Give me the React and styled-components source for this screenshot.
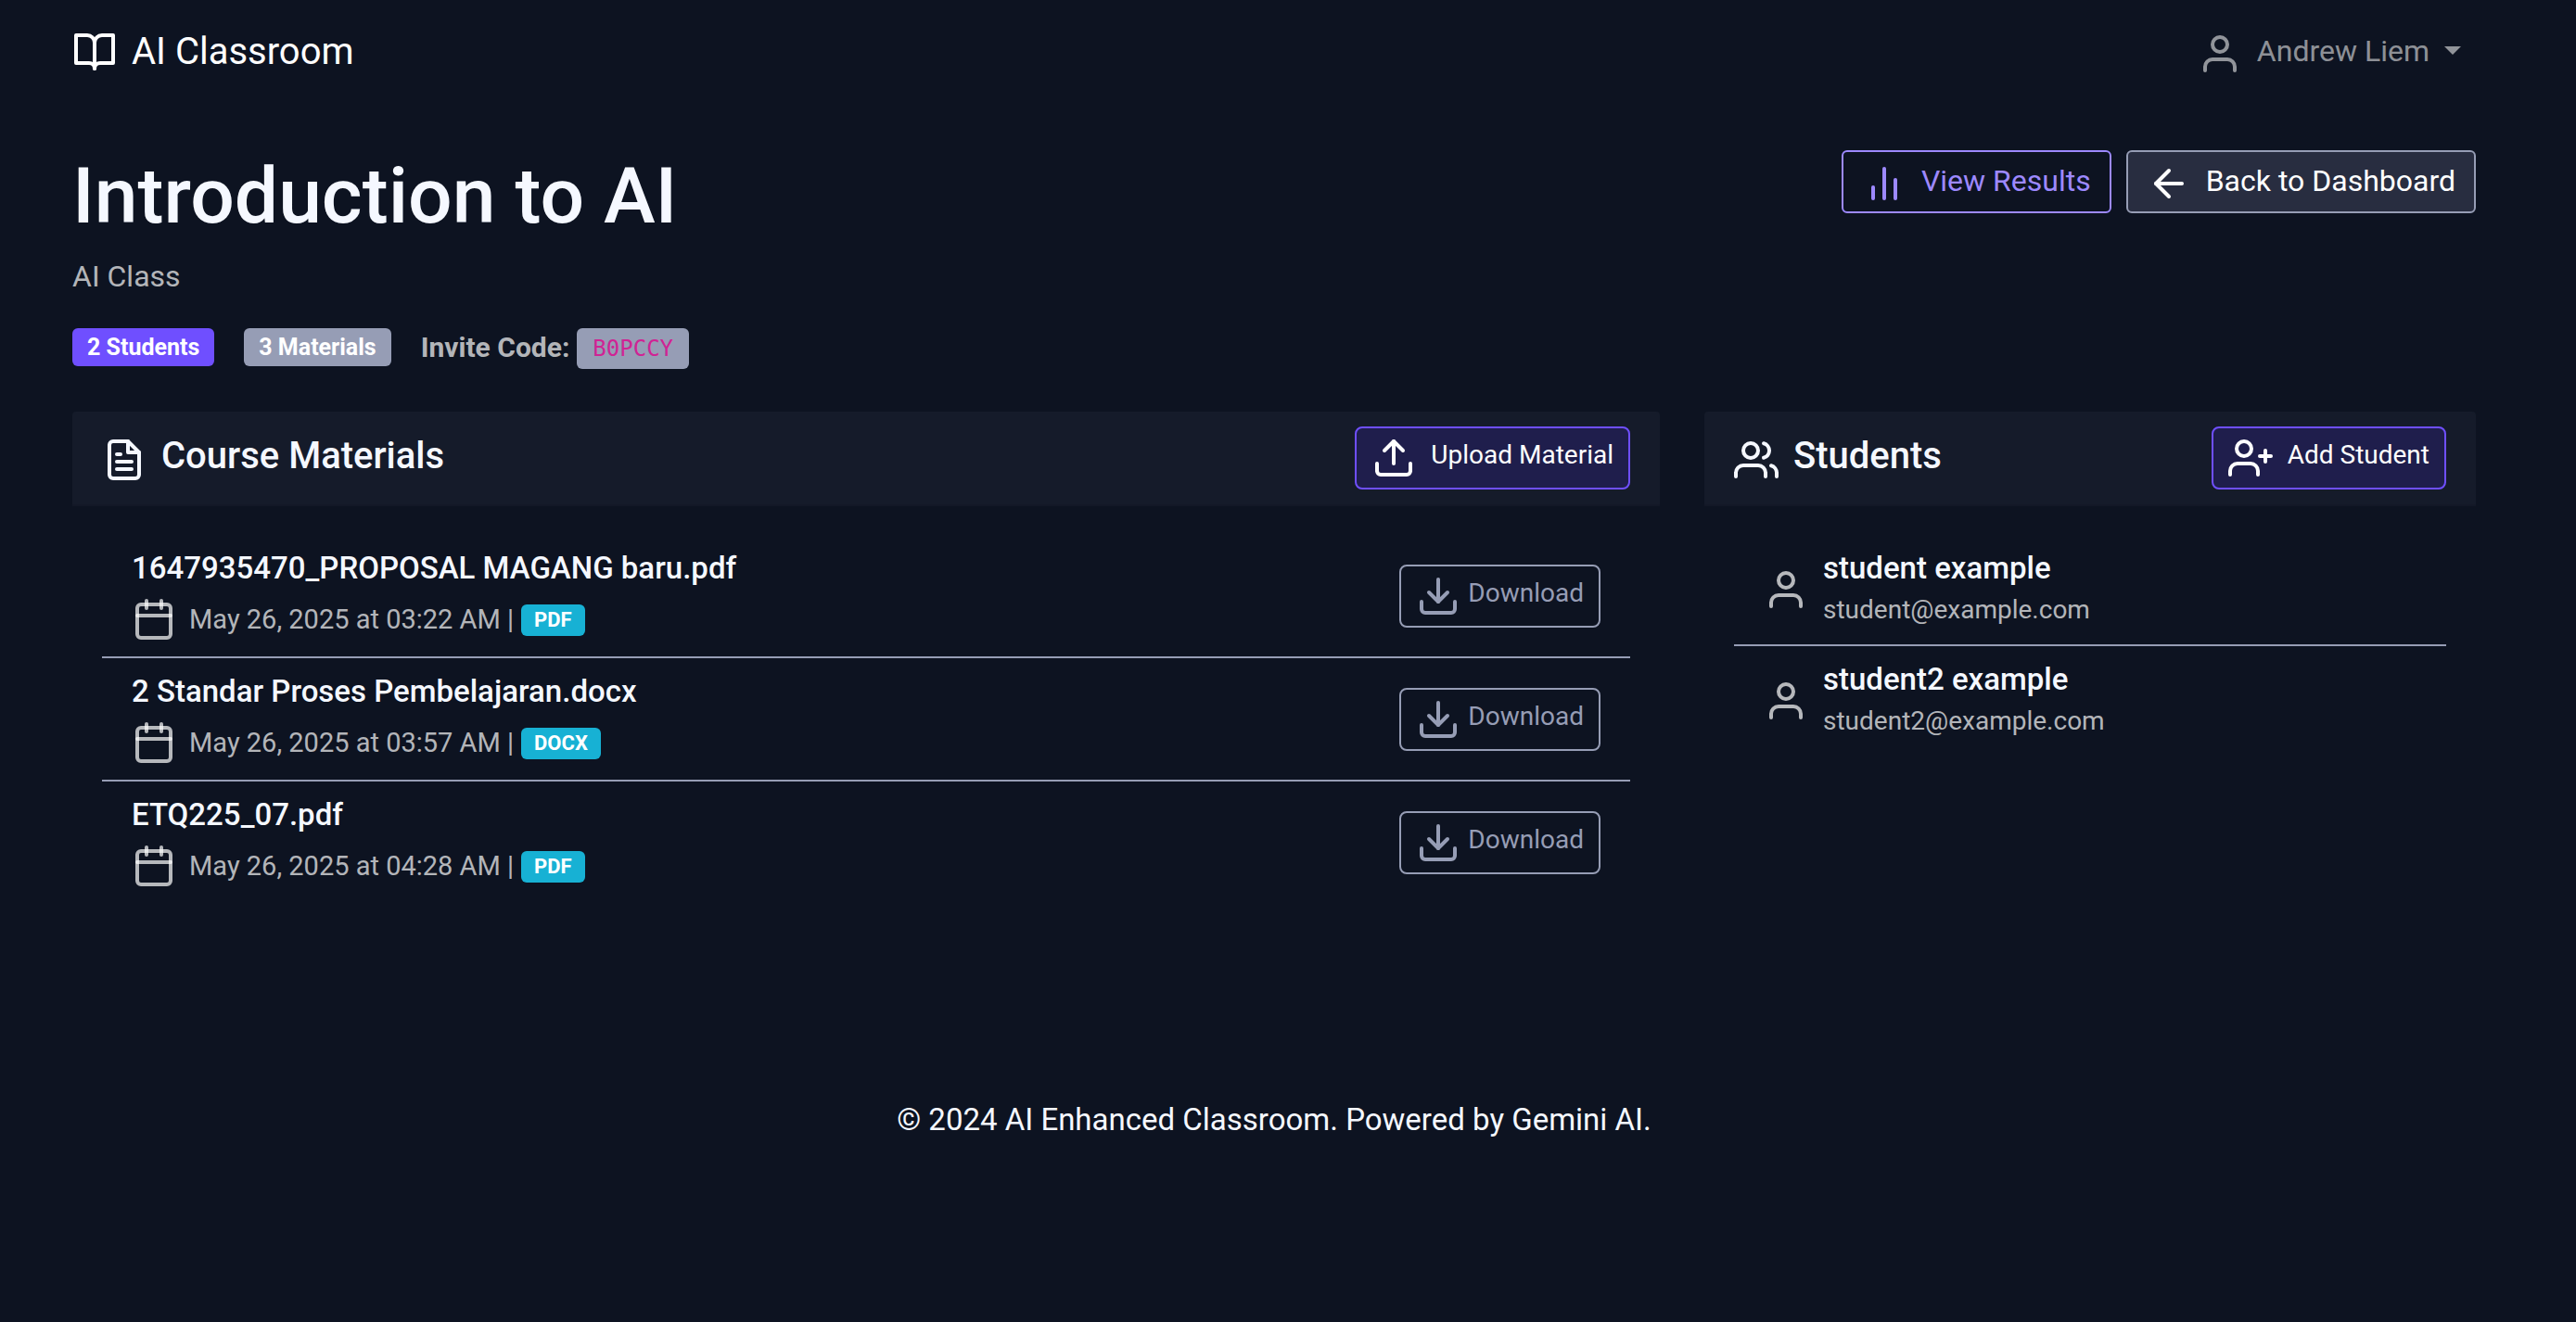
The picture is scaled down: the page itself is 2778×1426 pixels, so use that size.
import React from "react";
import styled, { createGlobalStyle, css } from "styled-components";
import {
  FiArrowLeft,
  FiBarChart2,
  FiBookOpen,
  FiCalendar,
  FiDownload,
  FiFileText,
  FiUpload,
  FiUser,
  FiUserPlus,
  FiUsers,
} from "react-icons/fi";

const color = {
  page: "#0d1321",
  header: "#151b2a",
  heading: "#f5f8ff",
  white: "#ffffff",
  muted: "rgba(255, 255, 255, 0.7)",
  nav: "rgba(255, 255, 255, 0.55)",
  secondary: "#969db5",
  primary: "#6f4fff",
  primarySoft: "#9d89ff",
  primaryDark: "#1f1e4c",
  info: "#17b1d4",
  code: "#d02394",
};

const GlobalStyle = createGlobalStyle`
  *, *::before, *::after { box-sizing: border-box; }
  body {
    margin: 0;
    background: ${color.page};
    color: ${color.heading};
    font-family: Roboto, "Liberation Sans", sans-serif;
    font-size: 32px;
    line-height: 48px;
  }
  h1, h2, h3, p, ul { margin: 0; padding: 0; }
  svg { width: 48px; height: 48px; flex: none; }
`;

const Page = styled.div`
  display: flex;
  flex-direction: column;
  min-height: 100vh;
  padding: 0 108px 0 78px;
`;

const Navbar = styled.nav`
  display: flex;
  justify-content: space-between;
  align-items: center;
  padding: 30px 0;
`;

const Brand = styled.a`
  display: inline-flex;
  align-items: center;
  gap: 16px;
  color: ${color.white};
  font-size: 40px;
  text-decoration: none;
`;

const UserMenu = styled.button`
  display: inline-flex;
  align-items: center;
  gap: 16px;
  padding: 0 16px 0 0;
  border: 0;
  background: none;
  color: ${color.nav};
  font: inherit;

  svg { margin-top: 4px; }
  span { padding-bottom: 2px; }

  &::after {
    content: "";
    margin-bottom: 4px;
    border: 9px solid transparent;
    border-top-color: currentColor;
    border-bottom: 0;
  }
`;

const CourseHeader = styled.header`
  display: flex;
  justify-content: space-between;
  align-items: flex-start;
  padding: 50px 0 46px;
`;

const Title = styled.h1`
  font-size: 84px;
  font-weight: 500;
  line-height: 100px;
`;

const Subtitle = styled.p`
  margin-top: 12px;
  color: ${color.muted};
`;

const Summary = styled.div`
  display: flex;
  align-items: flex-start;
  gap: 32px;
  margin-top: 32px;
`;

const Badge = styled.span`
  border-radius: 6px;
  background: ${(p) => p.$bg};
  color: ${color.white};
  font-weight: 700;
  ${(p) =>
    p.$small
      ? css`
          margin-top: 2px;
          padding: 0 14px;
          font-size: 22px;
          line-height: 34px;
        `
      : css`
          padding: 0 16px;
          font-size: 25px;
          line-height: 41px;
        `}
`;

const Invite = styled.span`
  display: inline-flex;
  align-items: flex-start;
  gap: 8px;
  color: ${color.muted};
  font-size: 30px;
  font-weight: 700;
  line-height: 41px;
`;

const Code = styled.code`
  padding: 0 17px;
  border-radius: 6px;
  background: ${color.secondary};
  color: ${color.code};
  font-family: "DejaVu Sans Mono", monospace;
  font-size: 24px;
  font-weight: 400;
  line-height: 44px;
`;

const Actions = styled.div`
  display: flex;
  gap: 16px;
`;

const variants = {
  outlinePrimary: css`
    border-color: ${color.primarySoft};
    color: ${color.primarySoft};
  `,
  secondary: css`
    border-color: ${color.secondary};
    background: #282d40;
    color: ${color.white};
  `,
  primary: css`
    border-color: ${color.primary};
    background: ${color.primaryDark};
    color: ${color.white};
  `,
  outlineSecondary: css`
    border-color: ${color.secondary};
    color: ${color.secondary};
  `,
};

const Button = styled.button`
  display: inline-flex;
  align-items: center;
  flex: none;
  gap: ${(p) => (p.$tight ? 8 : 16)}px;
  border: 2px solid;
  background: transparent;
  font-family: inherit;
  cursor: pointer;
  ${(p) =>
    p.$small
      ? css`
          padding: 8px 16px;
          border-radius: 8px;
          font-size: 28px;
          line-height: 42px;
          span { padding-bottom: 6px; }
        `
      : css`
          padding: 6px 20px;
          border-radius: 6px;
          font-size: 32px;
          line-height: 48px;
          svg { margin-top: 4px; }
          span { padding-bottom: 2px; }
        `}
  ${(p) => variants[p.$variant]}
`;

const Columns = styled.main`
  display: grid;
  grid-template-columns: 2fr 1fr;
  margin: 0 -24px;
`;

const Column = styled.section`
  min-width: 0;
  padding: 0 24px;
`;

const CardHeader = styled.div`
  display: flex;
  justify-content: space-between;
  align-items: center;
  padding: 16px 32px;
  border-bottom: 2px solid #131827;
  border-radius: 4px 4px 0 0;
  background: ${color.header};
`;

const CardTitle = styled.h2`
  display: flex;
  align-items: center;
  gap: 16px;
  font-size: 40px;
  font-weight: 500;
  line-height: 48px;

  svg { margin-top: 4px; }
  span { padding-bottom: 4px; }
`;

const List = styled.ul`
  padding: 31px 32px 32px;
  list-style: none;
`;

const Item = styled.li`
  display: flex;
  align-items: center;
  padding: 0 32px;
  border-bottom: 2px solid ${color.secondary};

  &:last-child { border-bottom-color: transparent; }
`;

const MaterialItem = styled(Item)`
  justify-content: space-between;
`;

const StudentItem = styled(Item)`
  gap: 16px;

  > svg { color: ${color.muted}; }
`;

const ItemBody = styled.div`
  padding: 12px 0 16px;
`;

const ItemTitle = styled.h3`
  font-size: 33px;
  font-weight: 500;
`;

const Meta = styled.p`
  display: flex;
  align-items: center;
  gap: 14px;
  margin-top: 7px;
  color: ${color.muted};
  font-size: 29px;
`;

const MetaText = styled.span`
  display: inline-flex;
  align-items: center;
  gap: 8px;
`;

const Email = styled.p`
  color: ${color.muted};
  font-size: 28px;
  line-height: 42px;
`;

const Footer = styled.footer`
  padding: 176px 0 64px;
  font-size: 33px;
  text-align: center;
`;

const materials = [
  { name: "1647935470_PROPOSAL MAGANG baru.pdf", date: "May 26, 2025 at 03:22 AM", type: "PDF" },
  { name: "2 Standar Proses Pembelajaran.docx", date: "May 26, 2025 at 03:57 AM", type: "DOCX" },
  { name: "ETQ225_07.pdf", date: "May 26, 2025 at 04:28 AM", type: "PDF" },
];

const students = [
  { name: "student example", email: "student@example.com" },
  { name: "student2 example", email: "student2@example.com" },
];

export default function App() {
  return (
    <>
      <GlobalStyle />
      <Page>
        <Navbar>
          <Brand href="#">
            <FiBookOpen />
            AI Classroom
          </Brand>
          <UserMenu type="button">
            <FiUser />
            <span>Andrew Liem</span>
          </UserMenu>
        </Navbar>

        <CourseHeader>
          <div>
            <Title>Introduction to AI</Title>
            <Subtitle>AI Class</Subtitle>
            <Summary>
              <Badge $bg={color.primary}>2 Students</Badge>
              <Badge $bg={color.secondary}>3 Materials</Badge>
              <Invite>
                Invite Code:
                <Code>B0PCCY</Code>
              </Invite>
            </Summary>
          </div>
          <Actions>
            <Button type="button" $variant="outlinePrimary">
              <FiBarChart2 />
              <span>View Results</span>
            </Button>
            <Button type="button" $variant="secondary">
              <FiArrowLeft />
              <span>Back to Dashboard</span>
            </Button>
          </Actions>
        </CourseHeader>

        <Columns>
          <Column>
            <CardHeader>
              <CardTitle>
                <FiFileText />
                <span>Course Materials</span>
              </CardTitle>
              <Button type="button" $small $variant="primary">
                <FiUpload />
                <span>Upload Material</span>
              </Button>
            </CardHeader>
            <List>
              {materials.map((m) => (
                <MaterialItem key={m.name}>
                  <ItemBody>
                    <ItemTitle>{m.name}</ItemTitle>
                    <Meta>
                      <FiCalendar />
                      <MetaText>
                        {m.date} |
                        <Badge $small $bg={color.info}>{m.type}</Badge>
                      </MetaText>
                    </Meta>
                  </ItemBody>
                  <Button type="button" $small $tight $variant="outlineSecondary">
                    <FiDownload />
                    <span>Download</span>
                  </Button>
                </MaterialItem>
              ))}
            </List>
          </Column>

          <Column>
            <CardHeader>
              <CardTitle>
                <FiUsers />
                <span>Students</span>
              </CardTitle>
              <Button type="button" $small $variant="primary">
                <FiUserPlus />
                <span>Add Student</span>
              </Button>
            </CardHeader>
            <List>
              {students.map((s) => (
                <StudentItem key={s.email}>
                  <FiUser />
                  <ItemBody>
                    <ItemTitle>{s.name}</ItemTitle>
                    <Email>{s.email}</Email>
                  </ItemBody>
                </StudentItem>
              ))}
            </List>
          </Column>
        </Columns>

        <Footer>© 2024 AI Enhanced Classroom. Powered by Gemini AI.</Footer>
      </Page>
    </>
  );
}
